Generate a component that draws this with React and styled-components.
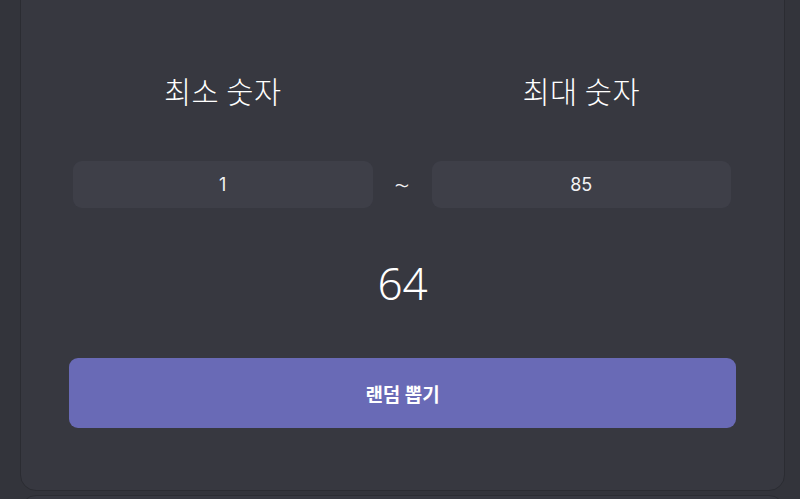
import React, { useState } from "react";
import styled, { createGlobalStyle } from "styled-components";

const GlobalStyle = createGlobalStyle`
  html, body {
    margin: 0;
    padding: 0;
    background: #33343b;
    overflow: hidden;
  }
  * {
    box-sizing: border-box;
  }
`;

const Page = styled.div`
  width: 800px;
  height: 499px;
  padding: 0 15px 0 20px;
  font-family: "Noto Sans CJK KR", "Noto Sans", sans-serif;
  color: #f2f2f4;
  overflow: hidden;
`;

const Card = styled.section`
  margin-top: -20px;
  background: #373840;
  border: 1px solid #2b2c32;
  border-radius: 16px;
  padding: 91px 48px 62px;
  display: flex;
  flex-direction: column;
`;

const NextCard = styled.div`
  margin-top: 4px;
  height: 40px;
  background: #373840;
  border: 1px solid #2b2c32;
  border-radius: 16px;
`;

const Row = styled.div`
  display: grid;
  grid-template-columns: 1fr 59px 1fr;
  align-items: center;
  padding: 0 5px 0 4px;
  margin-top: ${(p) => p.$gap || 0}px;
`;

const Label = styled.div`
  text-align: center;
  font-size: 29.5px;
  font-weight: 300;
  line-height: 36px;
  letter-spacing: 0.5px;
  color: #ffffff;
`;

const Input = styled.input`
  height: 47px;
  width: 100%;
  border: none;
  outline: none;
  border-radius: 9px;
  background: #3e3f48;
  color: #f2f2f4;
  text-align: center;
  font-family: "Inter", "Noto Sans", sans-serif;
  font-size: 18px;
`;

const Tilde = styled.span`
  text-align: center;
  font-family: "Noto Sans", sans-serif;
  font-size: 26px;
  font-weight: 300;
  line-height: 1;
  color: #f2f2f4;
`;

const Result = styled.div`
  margin-top: 45px;
  text-align: center;
  font-family: "Noto Sans", sans-serif;
  font-size: 44px;
  font-weight: 300;
  line-height: 60px;
  color: #ffffff;
`;

const Button = styled.button`
  margin-top: 45px;
  height: 70px;
  width: 100%;
  border: none;
  border-radius: 9px;
  background: #696ab6;
  color: #ffffff;
  font-family: "Noto Sans CJK KR", sans-serif;
  font-size: 19px;
  font-weight: 700;
  cursor: pointer;
`;

export default function App() {
  const [min, setMin] = useState("1");
  const [max, setMax] = useState("85");
  const [value, setValue] = useState(64);

  const pick = () => {
    const lo = parseInt(min, 10) || 0;
    const hi = parseInt(max, 10) || 0;
    setValue(Math.floor(Math.random() * (hi - lo + 1)) + lo);
  };

  return (
    <>
      <GlobalStyle />
      <Page>
        <Card>
          <Row>
            <Label>최소 숫자</Label>
            <span />
            <Label>최대 숫자</Label>
          </Row>
          <Row $gap={53}>
            <Input value={min} onChange={(e) => setMin(e.target.value)} />
            <Tilde>~</Tilde>
            <Input value={max} onChange={(e) => setMax(e.target.value)} />
          </Row>
          <Result>{value}</Result>
          <Button onClick={pick}>랜덤 뽑기</Button>
        </Card>
        <NextCard />
      </Page>
    </>
  );
}
